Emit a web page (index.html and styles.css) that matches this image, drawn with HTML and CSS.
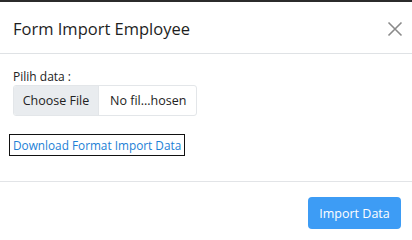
FILE: index.html
```html
<!DOCTYPE html>
<html>
<head>
<meta charset="utf-8">
<link rel="stylesheet" href="styles.css">
</head>
<body>
<div class="modal">
  <div class="modal-header">
    <h5 class="modal-title">Form Import Employee</h5>
    <span class="close">
      <svg width="16" height="16" viewBox="0 0 16 16"><path d="M1.5 1.5 L14.5 14.5 M14.5 1.5 L1.5 14.5" stroke="#8a8a8a" stroke-width="1.6" fill="none"/></svg>
    </span>
  </div>
  <div class="modal-body">
    <label class="label">Pilih data :</label>
    <div class="file-input">
      <span class="file-btn">Choose File</span>
      <span class="file-name">No fil...hosen</span>
    </div>
    <div class="link-row">
      <a class="download-link" href="#">Download Format Import Data</a>
    </div>
  </div>
  <div class="modal-footer">
    <button class="btn-primary">Import Data</button>
  </div>
</div>
</body>
</html>
```
FILE: styles.css
```css
* { box-sizing: border-box; }
html, body { margin: 0; padding: 0; background: #fff; }
body {
  font-family: "Open Sans", "Noto Sans", sans-serif;
  color: #212529;
  width: 412px;
  height: 240px;
  overflow: hidden;
}
.modal {
  border-top: 2px solid #2b2b2b;
  display: flex;
  flex-direction: column;
  height: 240px;
}
.modal-header {
  height: 52px;
  display: flex;
  align-items: center;
  justify-content: space-between;
  padding: 0 9px 0 13px;
  border-bottom: 1px solid #dfe2e5;
}
.modal-title {
  margin: 0;
  font-size: 16.5px;
  font-weight: 500;
  color: #1e1e1e;
  padding-top: 2px;
}
.close { display: flex; padding-top: 2px; }
.modal-body {
  padding: 15px 13px 0 13px;
  height: 128px;
  border-bottom: 1px solid #e2e4e7;
}
.label {
  display: block;
  font-size: 12px;
  line-height: 16px;
  color: #222;
  margin-bottom: 0;
}
.file-input {
  display: flex;
  width: 184px;
  height: 31px;
  border: 1px solid #e3e6e9;
  border-radius: 3px;
  overflow: hidden;
  font-size: 12.5px;
  color: #222;
}
.file-btn {
  background: #e9ecef;
  width: 85px;
  display: flex;
  align-items: center;
  justify-content: center;
  border-right: 1px solid #e3e6e9;
}
.file-name {
  flex: 1;
  display: flex;
  align-items: center;
  padding-left: 11px;
}
.link-row { margin-top: 17px; margin-left: -4px; }
.download-link {
  display: inline-block;
  border: 1px solid #111;
  padding: 1px 3px;
  font-size: 11.8px;
  line-height: 18px;
  color: #1c7fd6;
  text-decoration: none;
}
.modal-footer {
  flex: 1;
  display: flex;
  justify-content: flex-end;
  align-items: flex-start;
  padding: 15px 11px 0 0;
}
.btn-primary {
  background: #3d9cf5;
  color: #fff;
  border: none;
  border-radius: 4px;
  font-family: inherit;
  font-size: 12.5px;
  font-weight: 500;
  width: 93px;
  height: 32px;
  padding: 0;
}
```
